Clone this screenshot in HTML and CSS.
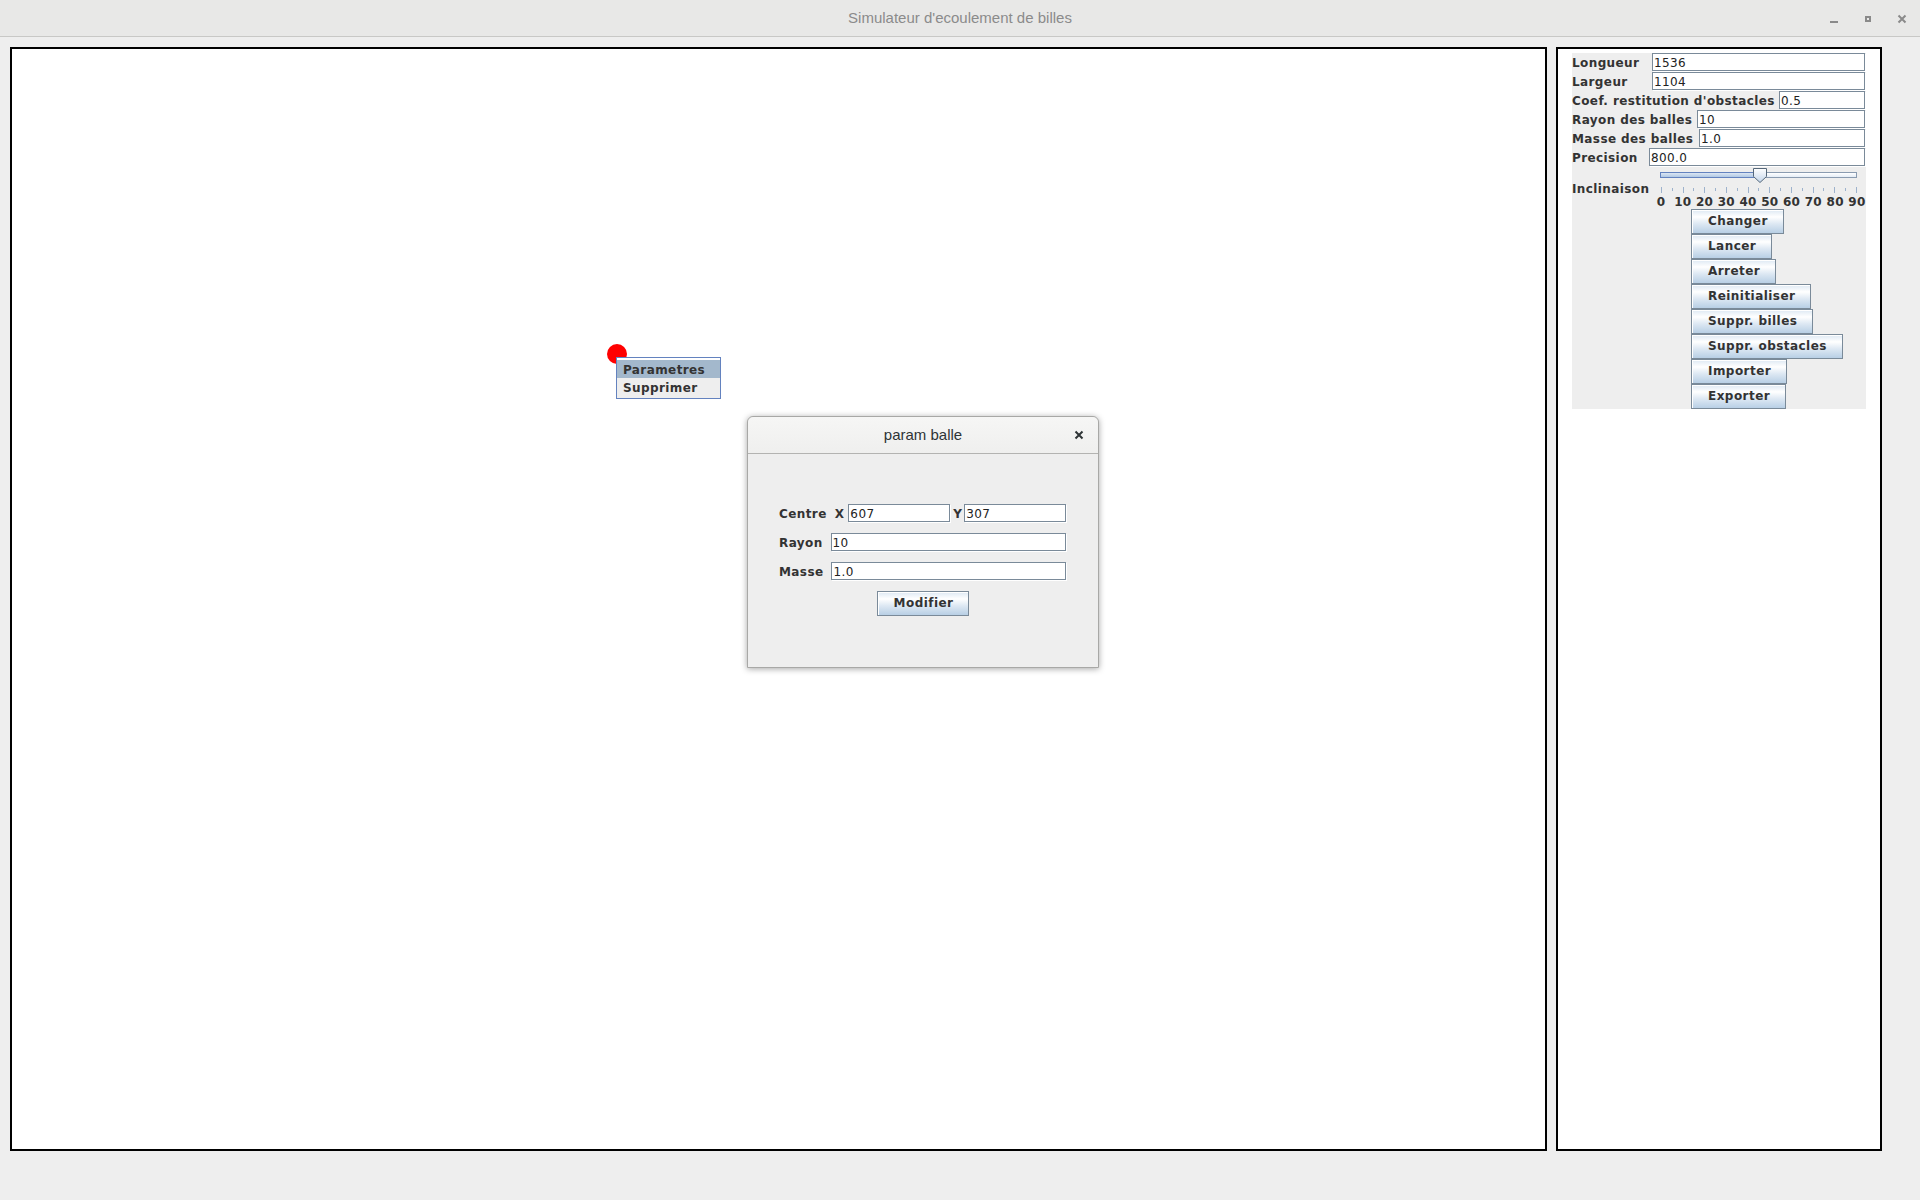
FILE: index.html
```html
<!DOCTYPE html>
<html lang="fr">
<head>
<meta charset="utf-8">
<title>Simulateur d'ecoulement de billes</title>
<link rel="stylesheet" href="styles.css">
</head>
<body>
<div class="titlebar">
  <div class="tb-side"></div>
  <div class="tb-title">Simulateur d'ecoulement de billes</div>
  <div class="tb-controls">
    <svg class="wc" width="16" height="16" viewBox="0 0 16 16"><rect x="4" y="10" width="8" height="2" fill="#8a8a8a"/></svg>
    <svg class="wc" width="16" height="16" viewBox="0 0 16 16"><rect x="5" y="5" width="6" height="6" fill="#8a8a8a"/><rect x="7" y="7" width="2" height="2" fill="#e8e8e7"/></svg>
    <svg class="wc" width="16" height="16" viewBox="0 0 16 16"><path d="M4.5 4.5L11.5 11.5M11.5 4.5L4.5 11.5" stroke="#8a8a8a" stroke-width="2"/></svg>
  </div>
</div>

<div class="main">
  <div class="canvas">
    <div class="ball"></div>
    <div class="popup">
      <div class="popup-item selected">Parametres</div>
      <div class="popup-item">Supprimer</div>
    </div>
  </div>

  <div class="side">
    <div class="controls">
      <div class="row"><span class="lbl w-long">Longueur</span><input class="field" type="text" value="1536"></div>
      <div class="row"><span class="lbl w-long">Largeur</span><input class="field" type="text" value="1104"></div>
      <div class="row"><span class="lbl w-coef">Coef. restitution d'obstacles</span><input class="field" type="text" value="0.5"></div>
      <div class="row"><span class="lbl w-rayon">Rayon des balles</span><input class="field" type="text" value="10"></div>
      <div class="row"><span class="lbl w-masse">Masse des balles</span><input class="field" type="text" value="1.0"></div>
      <div class="row"><span class="lbl w-prec">Precision</span><input class="field" type="text" value="800.0"></div>

      <div class="slider-row">
        <span class="lbl">Inclinaison</span>
        <div class="slider">
          <div class="track-wrap">
            <div class="track"><div class="track-fill"></div></div>
            <svg class="thumb" width="14" height="15" viewBox="0 0 14 15">
              <defs><linearGradient id="tg" x1="0" y1="0" x2="0" y2="1"><stop offset="0" stop-color="#ffffff"/><stop offset="1" stop-color="#c3d5ea"/></linearGradient></defs>
              <path d="M0.5 0.5H13.5V8.5L7 14.5L0.5 8.5Z" fill="url(#tg)" stroke="#56687a"/>
            </svg>
          </div>
          <div class="ticks">
            <i class="tick major"></i><i class="tick"></i><i class="tick major"></i><i class="tick"></i>
            <i class="tick major"></i><i class="tick"></i><i class="tick major"></i><i class="tick"></i>
            <i class="tick major"></i><i class="tick"></i><i class="tick major"></i><i class="tick"></i>
            <i class="tick major"></i><i class="tick"></i><i class="tick major"></i><i class="tick"></i>
            <i class="tick major"></i><i class="tick"></i><i class="tick major"></i>
          </div>
          <div class="tick-labels">
            <span class="tl"><b>0</b></span><span class="tl"><b>10</b></span><span class="tl"><b>20</b></span>
            <span class="tl"><b>30</b></span><span class="tl"><b>40</b></span><span class="tl"><b>50</b></span>
            <span class="tl"><b>60</b></span><span class="tl"><b>70</b></span><span class="tl"><b>80</b></span>
            <span class="tl"><b>90</b></span>
          </div>
        </div>
      </div>

      <div class="btns">
        <button class="jbtn">Changer</button>
        <button class="jbtn">Lancer</button>
        <button class="jbtn">Arreter</button>
        <button class="jbtn">Reinitialiser</button>
        <button class="jbtn">Suppr. billes</button>
        <button class="jbtn">Suppr. obstacles</button>
        <button class="jbtn">Importer</button>
        <button class="jbtn">Exporter</button>
      </div>
    </div>
  </div>
</div>

<div class="dialog">
  <div class="dlg-head">
    <div></div>
    <div class="dlg-title">param balle</div>
    <div class="dlg-close"><svg width="10" height="10" viewBox="0 0 10 10"><path d="M1.5 1.5L8.5 8.5M8.5 1.5L1.5 8.5" stroke="#2e3436" stroke-width="2"/></svg></div>
  </div>
  <div class="dlg-body">
    <div class="drow">
      <span class="dlbl gap-centre">Centre</span>
      <span class="dlbl gap-x">X</span>
      <input class="field dfield" type="text" value="607">
      <span class="dlbl gap-y">Y</span>
      <input class="field dfield" type="text" value="307">
    </div>
    <div class="drow">
      <span class="dlbl gap-lbl">Rayon</span>
      <input class="field dfield" type="text" value="10">
    </div>
    <div class="drow">
      <span class="dlbl gap-lbl">Masse</span>
      <input class="field dfield" type="text" value="1.0">
    </div>
    <button class="jbtn dbtn">Modifier</button>
  </div>
</div>
</body>
</html>
```

FILE: styles.css
```css
html, body {
  margin: 0;
  padding: 0;
}
body {
  width: 1920px;
  height: 1200px;
  overflow: hidden;
  background: #eeeeee;
  font-family: "DejaVu Sans", sans-serif;
  font-size: 12px;
  color: #333333;
  position: relative;
}

/* window title bar */
.titlebar {
  height: 36px;
  border-bottom: 1px solid #c8c8c6;
  background: #e8e8e7;
  display: grid;
  grid-template-columns: 1fr auto 1fr;
  align-items: center;
}
.tb-title {
  font-family: "Liberation Sans", Arial, sans-serif;
  font-size: 15px;
  color: #8b8b8b;
  padding-bottom: 2px;
}
.tb-controls {
  justify-self: end;
  display: flex;
  gap: 18px;
  padding-right: 10px;
  padding-top: 2px;
}
.wc { display: block; }

/* main area */
.main {
  display: flex;
  gap: 9px;
  padding: 10px 0 0 10px;
}
.canvas {
  position: relative;
  box-sizing: border-box;
  width: 1537px;
  height: 1104px;
  border: 2px solid #000;
  background: #fff;
}
.ball {
  position: absolute;
  left: 595px;
  top: 295px;
  width: 20px;
  height: 20px;
  border-radius: 50%;
  background: #ff0000;
}
.popup {
  position: absolute;
  left: 604px;
  top: 308px;
  box-sizing: border-box;
  width: 105px;
  height: 42px;
  border: 1px solid #6382bf;
  background: #eeeeee;
  padding-top: 2px;
  box-shadow: inset 0 2px 0 #ffffff;
}
.popup-item {
  height: 18px;
  line-height: 21px;
  padding-left: 6px;
  font-weight: bold;
  letter-spacing: 0.4px;
  color: #333;
}
.popup-item.selected { background: #a3b8cc; line-height: 20px; }

/* side panel */
.side {
  box-sizing: border-box;
  width: 326px;
  height: 1104px;
  border: 2px solid #000;
  background: #fff;
  padding: 4px 14px;
}
.controls {
  background: #eeeeee;
}
.row {
  display: flex;
  align-items: center;
  height: 18px;
  margin-bottom: 1px;
}
.lbl {
  font-weight: bold;
  letter-spacing: 0.4px;
  white-space: nowrap;
  flex-shrink: 0;
  color: #333;
  padding-top: 1px;
}
.w-long { width: 80px; }
.w-coef { width: 207px; }
.w-rayon { width: 125px; }
.w-masse { width: 127px; }
.w-prec { width: 77px; }

.field {
  box-sizing: border-box;
  height: 18px;
  min-width: 0;
  flex: 1;
  margin: 0 1px 0 0;
  padding: 1px 0 0 1px;
  border: 1px solid #7a8a99;
  box-shadow: 1px 1px 0 #ffffff;
  background: #fff;
  font-family: "DejaVu Sans", sans-serif;
  font-size: 12px;
  letter-spacing: 0.4px;
  color: #222;
  outline: none;
  border-radius: 0;
}

/* slider */
.slider-row {
  display: flex;
  align-items: center;
  height: 42px;
}
.slider {
  margin-left: auto;
  box-sizing: border-box;
  width: 216px;
  height: 42px;
  padding: 0 9px 0 10px;
  display: flex;
  flex-direction: column;
}
.track-wrap {
  position: relative;
  height: 17px;
}
.track {
  box-sizing: border-box;
  margin-top: 5px;
  height: 6px;
  border: 1px solid #8a9bb0;
  background: linear-gradient(#ffffff, #e4ecf5);
}
.track-fill {
  margin: -1px 0 0 -1px;
  box-sizing: border-box;
  width: 100px;
  height: 6px;
  border: 1px solid #6382bf;
  background: linear-gradient(#dbe6f3, #b0c8e4);
}
.thumb {
  position: absolute;
  left: 93px;
  top: 1px;
  display: block;
}
.ticks {
  margin-top: 3px;
  height: 6px;
  display: flex;
  justify-content: space-between;
  align-items: flex-start;
  padding-left: 1px;
}
.tick {
  display: block;
  width: 1px;
  height: 3px;
  margin-top: 1px;
  background: #9db2cc;
}
.tick.major {
  height: 6px;
  margin-top: 0;
}
.tick-labels {
  margin-top: 2px;
  height: 14px;
  line-height: 14px;
  display: flex;
  justify-content: space-between;
  padding-left: 1px;
}
.tl {
  width: 0;
  display: flex;
  justify-content: center;
}
.tl b {
  font-weight: bold;
  letter-spacing: 0.2px;
  white-space: nowrap;
}

/* buttons */
.btns {
  display: flex;
  flex-direction: column;
  align-items: flex-start;
  padding-left: 119px;
}
.jbtn {
  box-sizing: border-box;
  height: 25px;
  margin: 0;
  padding: 0 15px 0 16px;
  border: 1px solid #7a8a99;
  border-radius: 0;
  background: linear-gradient(#dde8f3 0%, #ffffff 30%, #dde8f3 60%, #b8cfe5 100%);
  box-shadow: inset 1px 1px 0 #ffffff;
  font-family: "DejaVu Sans", sans-serif;
  font-size: 12px;
  font-weight: bold;
  letter-spacing: 0.45px;
  color: #333;
  line-height: 23px;
  white-space: nowrap;
}

/* dialog */
.dialog {
  position: absolute;
  left: 747px;
  top: 416px;
  box-sizing: border-box;
  width: 352px;
  height: 252px;
  border: 1px solid #a8a8a6;
  border-radius: 6px 6px 0 0;
  background: #eeeeee;
  box-shadow: 0 1px 6px rgba(0, 0, 0, 0.35);
  display: flex;
  flex-direction: column;
}
.dlg-head {
  height: 36px;
  border-bottom: 1px solid #b3b3b1;
  border-radius: 6px 6px 0 0;
  background: linear-gradient(#f6f6f5, #efefee);
  display: grid;
  grid-template-columns: 1fr auto 1fr;
  align-items: center;
}
.dlg-title {
  font-family: "Liberation Sans", Arial, sans-serif;
  font-size: 15px;
  color: #2e3436;
  padding-bottom: 1px;
}
.dlg-close {
  justify-self: end;
  padding-right: 14px;
  padding-bottom: 1px;
  display: flex;
}
.dlg-body {
  flex: 1;
  display: flex;
  flex-direction: column;
  padding: 50px 31px 0 31px;
}
.drow {
  display: flex;
  align-items: center;
  height: 18px;
  margin-bottom: 11px;
}
.dlbl {
  font-weight: bold;
  letter-spacing: 0.4px;
  white-space: nowrap;
  flex-shrink: 0;
  color: #333;
  padding-top: 1px;
}
.gap-centre { margin-right: 8px; }
.gap-x { margin-right: 4px; }
.gap-y { margin: 0 2px 0 2px; }
.gap-lbl { margin-right: 8px; }
.dfield { flex: 1; }
.dbtn {
  align-self: center;
  margin-top: 0;
}
```
